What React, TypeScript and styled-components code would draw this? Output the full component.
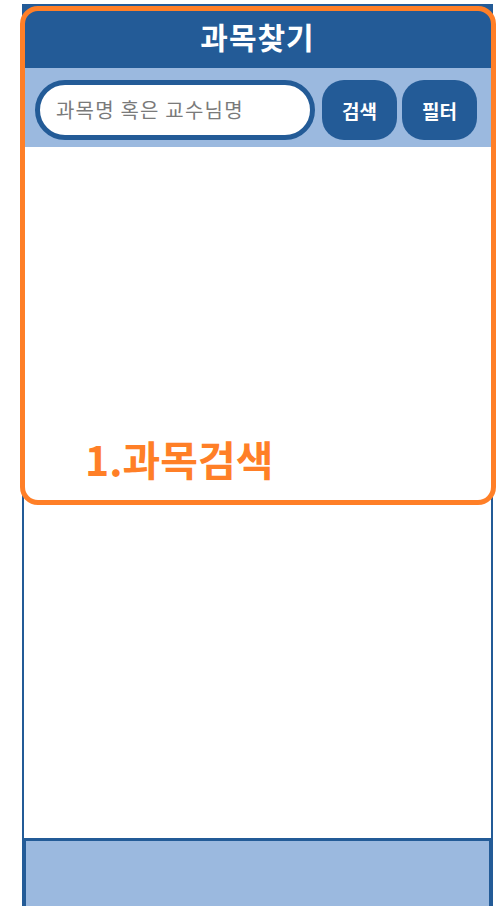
import styled, { createGlobalStyle } from "styled-components";

const GlobalStyle = createGlobalStyle`
  html, body {
    margin: 0;
    padding: 0;
    background: #ffffff;
    font-family: "Noto Sans CJK KR", "Noto Sans", sans-serif;
  }
`;

const Page = styled.div`
  position: relative;
  width: 504px;
  height: 906px;
  overflow: hidden;
  background: #ffffff;
`;

const Phone = styled.div`
  box-sizing: border-box;
  margin: 4px 0 0 22px;
  width: 471px;
  height: 902px;
  border-left: 2px solid #235b97;
  border-right: 2px solid #235b97;
  display: flex;
  flex-direction: column;
`;

const Header = styled.header`
  height: 64px;
  margin: 0 -2px;
  background: #235b97;
  display: flex;
  align-items: center;
  justify-content: center;
  color: #ffffff;
  font-size: 30px;
  font-weight: 700;
  letter-spacing: 1px;
`;

const SearchBar = styled.div`
  height: 79px;
  box-sizing: border-box;
  padding: 12px 14px 7px 11px;
  background: #9bb9df;
  display: flex;
  gap: 5px;
`;

const SearchInput = styled.input`
  box-sizing: border-box;
  width: 280px;
  height: 60px;
  margin-right: 2px;
  border: 5px solid #235b97;
  border-radius: 30px;
  background: #ffffff;
  padding: 0 0 2px 16px;
  font-family: "Noto Sans CJK KR", "Noto Sans", sans-serif;
  font-size: 20px;
  letter-spacing: 1.2px;
  color: #333;
  outline: none;
  &::placeholder {
    color: #7a7a7a;
  }
`;

const Btn = styled.button`
  width: 75px;
  height: 60px;
  border: none;
  border-radius: 22px;
  background: #235b97;
  color: #ffffff;
  font-family: "Noto Sans CJK KR", "Noto Sans", sans-serif;
  font-size: 19px;
  font-weight: 700;
  padding: 0;
`;

const Content = styled.main`
  flex: 1;
  background: #ffffff;
`;

const BottomBar = styled.footer`
  height: 68px;
  margin: 0 -1px 0 -1px;
  box-sizing: border-box;
  border: 3px solid #235b97;
  border-bottom: none;
  background: #9bb9df;
`;

const Annotation = styled.div`
  position: absolute;
  left: 20px;
  top: 6px;
  width: 476px;
  height: 499px;
  box-sizing: border-box;
  border: 5px solid #ff7f27;
  border-radius: 18px;
  display: flex;
  align-items: flex-end;
  padding: 0 0 21px 60px;
  pointer-events: none;
`;

const AnnotationLabel = styled.span`
  color: #ff7f27;
  font-size: 41px;
  font-weight: 700;
  line-height: 1;
`;

export default function App() {
  return (
    <Page>
      <GlobalStyle />
      <Phone>
        <Header>과목찾기</Header>
        <SearchBar>
          <SearchInput placeholder="과목명 혹은 교수님명" />
          <Btn>검색</Btn>
          <Btn>필터</Btn>
        </SearchBar>
        <Content />
        <BottomBar />
      </Phone>
      <Annotation>
        <AnnotationLabel>1.과목검색</AnnotationLabel>
      </Annotation>
    </Page>
  );
}
